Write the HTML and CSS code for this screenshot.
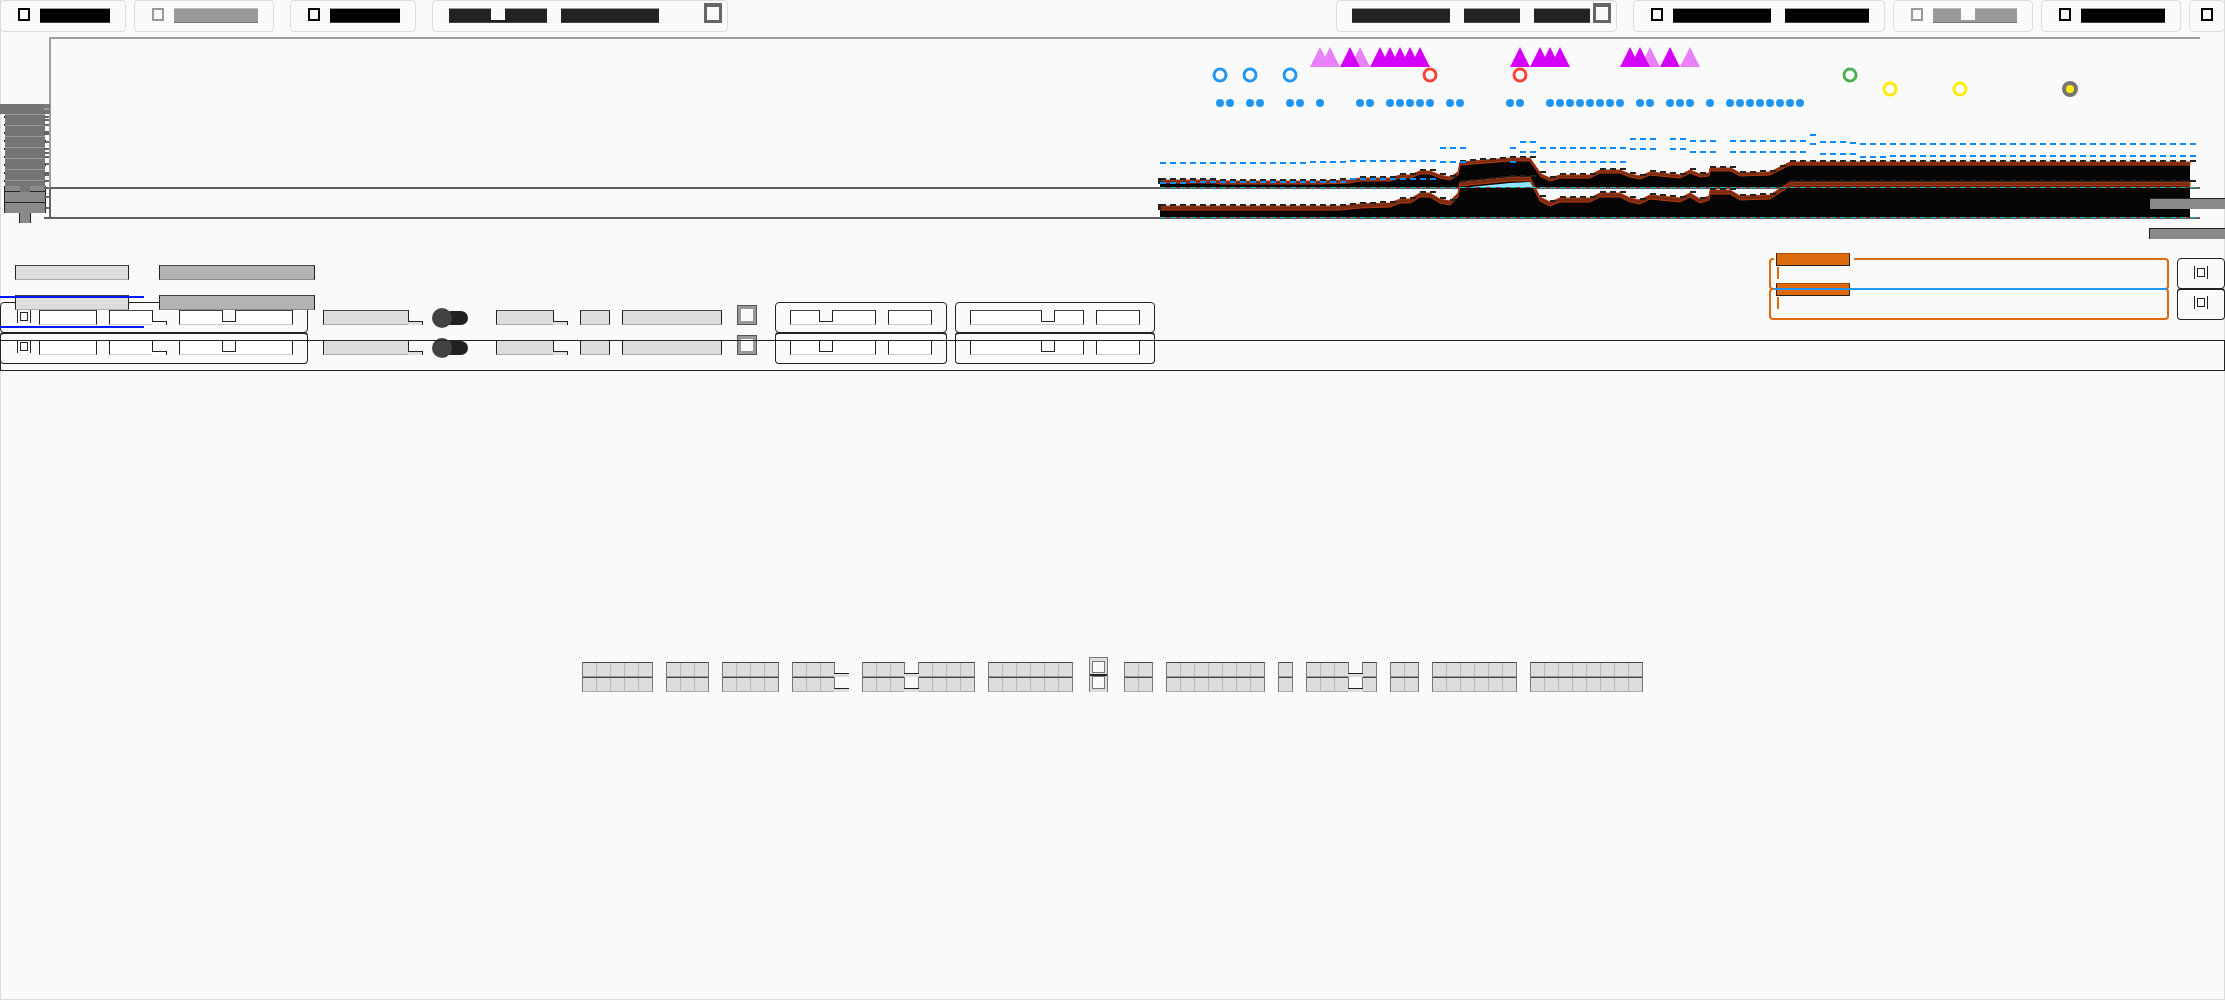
FILE: index.html
```html
<!DOCTYPE html>
<html lang="en">
<head>
<meta charset="utf-8">
<title>Timeline</title>
<link rel="stylesheet" href="styles.css">
</head>
<body>
<header class="toolbar">
  <button class="tool" aria-label="Open"><i class="glyph"></i><b class="bar c5"></b></button>
  <button class="tool muted" aria-label="Save" disabled><i class="glyph"></i><b class="bar c6"></b></button>
  <button class="tool spaced" aria-label="Share"><i class="glyph"></i><b class="bar c5"></b></button>
  <label class="tool picker spaced wide"><span class="joined"><b class="bar c3"></b><b class="under"></b><b class="bar c3"></b></span><b class="bar c7"></b><i class="caret"></i><select aria-label="View"><option></option></select></label>
  <label class="tool picker push narrow"><b class="bar c7"></b><b class="bar c4"></b><b class="bar c4"></b><i class="caret"></i><select aria-label="Range"><option></option></select></label>
  <button class="tool spaced" aria-label="Add item"><i class="glyph"></i><b class="bar c7"></b><b class="bar c6 next"></b></button>
  <button class="tool muted" aria-label="Undo" disabled><i class="glyph"></i><span class="joined"><b class="bar c2"></b><b class="under"></b><b class="bar c3"></b></span></button>
  <button class="tool" aria-label="Reload"><i class="glyph"></i><b class="bar c6"></b></button>
  <button class="tool only" aria-label="More"><i class="glyph"></i></button>
</header>
<main>
  <svg class="chart" id="chart" viewBox="0 32 2225 218" preserveAspectRatio="none" role="img" aria-label="Timeline chart"></svg>
  <section class="panel">
    <div class="left">
      <div class="tags"><span class="word tag8"></span><span class="word dark tag11"></span></div>
      <div class="tags"><span class="word tag8"></span><span class="word dark tag11"></span></div>
      <div class="lane">
        <button class="chip first" aria-label="Filter"><i class="mark"></i><span class="word c4"></span><span class="joined"><span class="word c3"></span><i class="tail"></i></span><span class="joined"><span class="word c3"></span><i class="notch"></i><span class="word c4"></span></span></button>
        <span class="joined option"><span class="word c6"></span><i class="tail"></i></span>
        <label class="switch"><input type="checkbox" aria-label="Toggle first lane"></label>
        <span class="joined"><span class="word c4"></span><i class="tail"></i></span><span class="word c2 after"></span><span class="word c7 after"></span>
        <i class="box"></i>
        <button class="chip" aria-label="Group"><span class="joined"><span class="word c2"></span><i class="notch"></i><span class="word c3"></span></span><span class="word c3"></span></button>
        <button class="chip last" aria-label="Sort"><span class="joined"><span class="word c5"></span><i class="notch"></i><span class="word c2"></span></span><span class="word c3"></span></button>
      </div>
      <div class="lane second">
        <button class="chip first" aria-label="Filter"><i class="mark"></i><span class="word c4"></span><span class="joined"><span class="word c3"></span><i class="tail"></i></span><span class="joined"><span class="word c3"></span><i class="notch"></i><span class="word c4"></span></span></button>
        <span class="joined option"><span class="word c6"></span><i class="tail"></i></span>
        <label class="switch"><input type="checkbox" aria-label="Toggle second lane"></label>
        <span class="joined"><span class="word c4"></span><i class="tail"></i></span><span class="word c2 after"></span><span class="word c7 after"></span>
        <i class="box"></i>
        <button class="chip" aria-label="Group"><span class="joined"><span class="word c2"></span><i class="notch"></i><span class="word c3"></span></span><span class="word c3"></span></button>
        <button class="chip last" aria-label="Sort"><span class="joined"><span class="word c5"></span><i class="notch"></i><span class="word c2"></span></span><span class="word c3"></span></button>
      </div>
    </div>
    <div class="right">
      <div class="fields">
        <div class="field"><span class="legend"></span><input type="text" aria-label="Search first lane"></div>
        <div class="field"><span class="legend"></span><input type="text" aria-label="Search second lane"></div>
      </div>
      <div class="steps">
        <button class="chip" aria-label="Next"><i class="mark"></i></button>
        <button class="chip" aria-label="Last"><i class="mark"></i></button>
      </div>
    </div>
  </section>
  <div class="message">
    <span class="cells c5"></span><span class="cells c3"></span><span class="cells c4"></span>
    <span class="joined"><span class="cells c3"></span><i class="step"></i></span>
    <span class="joined"><span class="cells c3"></span><i class="dip"></i><span class="cells c4"></span></span>
    <span class="cells c6"></span>
    <i class="double"></i>
    <span class="cells c2"></span><span class="cells c7"></span><span class="cells c1"></span>
    <span class="joined"><span class="cells c3"></span><i class="dip"></i><span class="cells c1"></span></span>
    <span class="cells c2"></span><span class="cells c6"></span><span class="cells c8"></span>
  </div>
</main>
<script src="chart.js"></script>
</body>
</html>
```
FILE: styles.css
```css
*, *::before, *::after { box-sizing: border-box; }
body {
  margin: 0;
  min-height: 100vh;
  background: #fafafa;
  border: solid #dcdcdc;
  border-width: 0 0 1px;
  font: 14px/16px Roboto, sans-serif;
  box-shadow: inset 1px 0 #dcdcdc, inset -1px 0 #dcdcdc;
  overflow-x: hidden;
}
button { font: inherit; background: none; margin: 0; border-radius: 4px; }
i, b { display: block; flex: none; }
.c1 { --n: 1; } .c2 { --n: 2; } .c3 { --n: 3; } .c4 { --n: 4; }
.c5 { --n: 5; } .c6 { --n: 6; } .c7 { --n: 7; } .c8 { --n: 8; }
.joined { display: flex; align-items: flex-end; flex: none; }

/* toolbar */
.toolbar { display: flex; gap: 8px; height: 32px; }
.tool {
  display: flex; align-items: flex-start; flex: none;
  height: 32px; padding: 7px 15px 0 17px;
  border: 1px solid #dcdcdc; border-radius: 4px;
  color: #000; position: relative;
}
.muted { color: #999; }
.spaced { margin-left: 8px; }
.push { margin-left: auto; }
.glyph { width: 12px; height: 13px; border: 2px solid; margin-right: 10px; background: #fafafa; }
.bar {
  width: calc(var(--n) * 14px); height: 15px; background: currentColor;
  border-top: 1px solid #999; border-bottom: 1px solid #444;
}
.muted .bar { border-color: #bbb #bbb #777; }
.next { margin-left: 14px; }
.under { width: 14px; height: 3px; background: currentColor; border-bottom: 1px solid #444; }
.muted .under { border-color: #777; }
.picker { color: #222; gap: 14px; padding: 7px 5px 0 16px; }
.wide { width: 296px; }
.narrow { width: 281px; padding-left: 15px; }
.picker select { position: absolute; inset: 0; width: 100%; height: 100%; opacity: 0; }
.caret { width: 18px; height: 20px; border: 3px solid #666; border-top-width: 4px; margin: -5px 0 0 auto; }
.narrow .caret { margin-left: -11px; }
.only { padding: 7px 11px 0; width: 36px; }

.chart { display: block; width: 100%; height: 218px; }

/* control lanes */
.panel { position: relative; display: flex; justify-content: space-between; height: 121px; padding-top: 3px; }
.panel::after {
  content: ""; position: absolute; inset: 90px 0 0; height: 31px;
  border: 1px solid #222; pointer-events: none;
}
.left { padding-top: 12px; }
.tags { position: relative; z-index: 1; display: flex; gap: 30px; height: 30px; padding-left: 15px; }
.tags + .tags { height: 7px; z-index: 2; }
.tags + .tags::before, .tags + .tags::after {
  content: ""; position: absolute; left: 0; top: 1px; width: 144px; height: 2px; background: #0018ff;
}
.tags + .tags::after { top: 31px; }
.word {
  flex: none; width: calc(var(--n) * 14px + 2px); height: 15px; background: #ddd;
  border: 1px solid #222; border-top-color: #444; border-bottom-color: #aaa;
}
.tag8 { --n: 8; }
.tag11 { --n: 11; background: #b3b3b3; border-bottom-color: #888; }
.lane { display: flex; height: 30px; padding-top: 8px; }
.lane .joined { height: 15px; }
.chip {
  display: flex; gap: 12px; flex: none; height: 31px; margin-top: -8px;
  padding: 7px 14px 0; border: 1px solid #222;
}
.first { padding-left: 16px; }
.chip .word { background: #fff; border-bottom-color: #ccc; }
.last { margin-left: 8px; }
.second .chip { height: 32px; border-top-width: 2px; padding-top: 6px; }
.mark {
  width: 14px; height: 13px; padding: 2px; border: solid #222; border-width: 0 1px;
  background: #fff; margin-right: -4px;
}
.mark::before { content: ""; display: block; width: 8px; height: 9px; border: 1px solid #222; }
.tail {
  position: relative; width: 15px; height: 4px; margin-left: -1px;
  border: solid #222; border-width: 1px 1px 0 0; background: #ddd;
}
.chip .tail { background: #fff; }
.notch {
  position: relative; width: 14px; height: 4px; margin: 0 -1px;
  border-top: 1px solid #222; border-bottom: 1px solid #ccc; background: #fff;
}
.option { margin-left: 15px; }
.switch { width: 36px; height: 14px; margin: 1px 28px 0 9px; }
.switch input {
  appearance: none; position: relative; display: block; width: 24px; height: 14px; margin: 0 0 0 12px;
  border-radius: 7px; background: #222;
}
.switch input::before {
  content: ""; position: absolute; left: -12px; top: -3px; width: 20px; height: 20px;
  border-radius: 50%; background: #424242;
}
.after { margin-left: 12px; }
.box { width: 20px; height: 20px; margin: -5px 18px 0 15px; border: 4px solid #999; outline: 1px solid #555; outline-offset: -1px; }

/* search fields */
.right { display: flex; gap: 8px; }
.fields { width: 400px; padding-top: 5px; }
.field { position: relative; height: 30px; }
.field input {
  display: block; width: 100%; height: 32px; border: 2px solid #dd6a0d; border-radius: 4px;
  background: none; outline: none;
}
.field::after { content: ""; position: absolute; left: 8px; top: 9px; width: 2px; height: 12px; background: #dd6a0d; }
.field::before { content: ""; position: absolute; left: 5px; top: 0; width: 80px; height: 2px; background: #fafafa; }
.field + .field::before { left: 5px; right: 2px; width: auto; background: #2196f3; z-index: 1; }
.legend {
  position: absolute; left: 7px; top: -5px; width: 74px; height: 13px;
  background: #dd6a0d; border: 1px solid #222; border-top-color: #a85008;
}
.steps { width: 48px; padding-top: 5px; }
.steps .chip { width: 48px; margin-top: 0; padding: 7px 0 0 16px; }
.steps .chip + .chip { height: 32px; margin-top: -1px; border-top-width: 2px; padding-top: 6px; }

/* empty-state message */
.message { display: flex; justify-content: center; align-items: flex-end; gap: 13px; margin-top: 286px; height: 35px; }
.cells {
  flex: none; width: calc(var(--n) * 14px + 1px); height: 30px;
  border: 1px solid #777; border-top-color: #444; border-bottom-color: #aaa;
  background:
    linear-gradient(#999, #999) 0 13px / 100% 1px no-repeat,
    linear-gradient(#444, #444) 0 14px / 100% 1px no-repeat,
    repeating-linear-gradient(90deg, #ddd 0 13px, #b8b8b8 13px 14px);
}
.dip, .step {
  position: relative; width: 15px; height: 30px; margin: 0 -1px;
  background:
    linear-gradient(#222, #222) 0 11px / 100% 1px no-repeat,
    linear-gradient(#ddd, #ddd) 0 12px / 100% 3px no-repeat,
    linear-gradient(#222, #222) 0 26px / 100% 1px no-repeat,
    linear-gradient(#ddd, #ddd) 0 27px / 100% 3px no-repeat;
}
.step { margin-right: 0; }
.double {
  width: 19px; height: 35px; margin: 0 3px; border: 1px solid #777; border-bottom: 0;
  background:
    linear-gradient(#222, #222) 0 16px / 100% 2px no-repeat,
    linear-gradient(#fafafa, #fafafa) 3px 4px / 11px 10px no-repeat,
    linear-gradient(#fafafa, #fafafa) 3px 19px / 11px 11px no-repeat,
    linear-gradient(#777, #777) 2px 3px / 13px 12px no-repeat,
    linear-gradient(#777, #777) 2px 18px / 13px 13px no-repeat,
    #ddd;
}
```
FILE: chart.js
```js
const svg = document.getElementById('chart');
let out = '';
const rect = (x, y, w, h, fill) => { out += `<rect x="${x}" y="${y}" width="${w}" height="${h}" fill="${fill}"/>`; };
const run = (a, b) => { const r = []; for (let x = a; x <= b; x += 10) r.push(x); return r; };

// frame
rect(49, 37, 2151, 2, '#9e9e9e');
rect(49, 38, 2, 150, '#9e9e9e');
rect(49, 188, 2, 30, '#666');

// event triangles
const tri = (x, c) => { out += `<path d="M${x - 10} 67L${x} 47L${x + 10} 67z" fill="${c}"/>`; };
[1320, 1330, 1360, 1650, 1690].forEach(x => tri(x, '#ea80fc'));
[1350, ...run(1380, 1420), 1520, 1540, 1550, 1560, 1630, 1640, 1670].forEach(x => tri(x, '#d500f9'));

// status rings and dots
const ring = (x, y, c) => { out += `<circle cx="${x}" cy="${y}" r="6" fill="#fff" stroke="${c}" stroke-width="3"/>`; };
[1220, 1250, 1290].forEach(x => ring(x, 75, '#2196f3'));
[1430, 1520].forEach(x => ring(x, 75, '#f44336'));
ring(1850, 75, '#4caf50');
[1890, 1960].forEach(x => ring(x, 89, '#ffea00'));
out += '<circle cx="2070" cy="89" r="6" fill="#ffea00" stroke="#757575" stroke-width="4"/>';
[1220, 1230, 1250, 1260, 1290, 1300, 1320, 1360, 1370, ...run(1390, 1430), 1450, 1460, 1510, 1520,
  ...run(1550, 1620), 1640, 1650, 1670, 1680, 1690, 1710, ...run(1730, 1800)]
  .forEach(x => { out += `<circle cx="${x}" cy="103" r="4" fill="#2196f3"/>`; });

// filled series, each with a band along its top edge and hourly steps
const series = (pts, base, band) => {
  const line = pts.map(p => p.join(' ')).join('L');
  out += `<path d="M${line}L2190 ${base}L1160 ${base}z" fill="#050505"/>`;
  const low = pts.slice().reverse().map(([x, y]) => `${x} ${y + band}`).join('L');
  out += `<path d="M${line}L${low}z" fill="#7a2c12" stroke="#b83a10"/>`;
  run(1160, 2190).forEach(x => {
    const i = Math.max(1, pts.findIndex(p => p[0] >= x));
    const [x0, y0] = pts[i - 1], [x1, y1] = pts[i];
    rect(x, Math.round(y0 + (y1 - y0) * (x - x0) / (x1 - x0)) - 2, 6, 2, '#222');
  });
  rect(1158, pts[0][1] - 2, 3, 6, '#222');
};
series([[1160, 180], [1215, 180], [1220, 181], [1320, 181], [1350, 180], [1360, 178], [1390, 178], [1400, 175],
  [1410, 175], [1420, 171], [1430, 171], [1440, 175], [1450, 177], [1458, 172], [1460, 162], [1510, 158], [1530, 158],
  [1541, 174], [1550, 178], [1560, 175], [1590, 175], [1600, 170], [1620, 170], [1630, 174], [1640, 176], [1650, 172],
  [1680, 175], [1690, 170], [1700, 174], [1709, 173], [1710, 168], [1731, 168], [1740, 173], [1770, 172], [1790, 162],
  [2190, 162]], 187, 3);
rect(50, 187, 2150, 2, '#616161');
series([[1160, 206], [1340, 206], [1360, 204], [1390, 203], [1400, 199], [1410, 199], [1420, 193], [1430, 193],
  [1440, 199], [1450, 201], [1458, 193], [1460, 182], [1510, 177], [1530, 177], [1540, 197], [1550, 202], [1560, 198],
  [1590, 198], [1600, 193], [1620, 193], [1630, 198], [1640, 200], [1650, 195], [1680, 198], [1690, 193], [1700, 199],
  [1709, 196], [1710, 190], [1730, 190], [1740, 196], [1770, 195], [1790, 182], [2190, 182]], 217, 4);
out += '<path d="M1470 187L1510 183L1530 182L1533 187z" fill="#90e6ff"/>';
rect(44, 217, 2156, 2, '#616161');
[187, 217].forEach(y => {
  rect(1160, y, 1036, 1, '#8a3020');
  out += `<path d="M1160 ${y}.5H2196" stroke="#10b5bd" stroke-dasharray="6 4"/>`;
});

// limits
[[1160, 1310, 163], [1310, 1350, 162], [1350, 1440, 161], [1440, 1470, 148], [1440, 1470, 162], [1510, 1520, 148],
  [1510, 1520, 162], [1520, 1540, 142], [1520, 1540, 152], [1540, 1630, 148], [1540, 1630, 162], [1630, 1660, 139],
  [1630, 1660, 149], [1670, 1690, 139], [1670, 1690, 149], [1690, 1720, 141], [1690, 1720, 152], [1730, 1810, 141],
  [1730, 1810, 152], [1810, 1820, 135], [1810, 1820, 144], [1820, 1850, 142], [1820, 1860, 154], [1850, 1860, 143],
  [1860, 2200, 144], [1860, 1890, 157], [1890, 2200, 156], [1160, 1190, 183], [1190, 1350, 182], [1350, 1440, 179]]
  .forEach(([a, b, y]) => {
    out += `<path d="M${a} ${y}H${b}" stroke="#0d8bff" stroke-width="2" stroke-dasharray="6 4"/>`;
  });

// axis labels and ticks
rect(0, 104, 50, 10, '#757575');
rect(5, 114, 40, 73, '#757575');
out += '<path d="M4.5 116V186M45.5 116V186" stroke="#222" stroke-dasharray="2 6"/>';
for (let y = 114; y < 187; y += 11) rect(5, y, 40, 1, '#969696');
rect(4, 186, 42, 27, '#222');
rect(5, 186, 40, 27, '#8a8a8a');
rect(19, 213, 12, 10, '#222');
rect(20, 213, 10, 10, '#8a8a8a');
rect(5, 191, 40, 1, '#222');
rect(5, 202, 40, 1, '#222');
rect(20, 186, 10, 6, '#757575');
[116, 119, 124, 131, 133, 141, 148, 152, 156, 163, 172, 174, 180, 187, 196, 207].forEach(y => rect(44, y, 5, 2, '#666'));
rect(44, 108, 5, 2, '#9e9e9e');

// edge labels
[[198, 2150], [228, 2149]].forEach(([y, x]) => {
  rect(x, y, 2225 - x, 11, '#222');
  rect(2150, y + 1, 75, 10, '#8a8a8a');
});
svg.innerHTML = out;
```
